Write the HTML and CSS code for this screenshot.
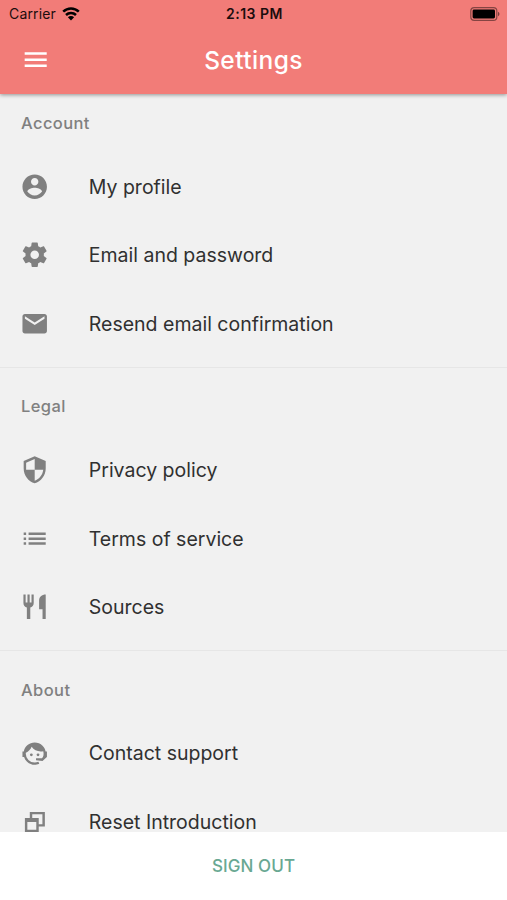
FILE: index.html
```html
<!DOCTYPE html>
<html lang="en">
<head>
    <meta charset="UTF-8">
    <title>Settings</title>
    <link rel="stylesheet" href="styles.css">
</head>
<body>

<header class="app-header">
    <div class="status-bar">
        <div class="carrier">
            <span>Carrier</span>
            <svg class="wifi" viewBox="0 0 18 14">
                <path d="M1.2 4.7a11.2 11.2 0 0 1 15.6 0M4 8a7.2 7.2 0 0 1 10 0" fill="none" stroke="#000" stroke-width="2.5"/>
                <path d="M9 13.4l-3.1-3.1a4.4 4.4 0 0 1 6.2 0z"/>
            </svg>
        </div>
        <span class="time">2:13 PM</span>
        <div class="battery-box">
            <svg class="battery" viewBox="0 0 30 14">
                <rect x="0.8" y="0.7" width="26" height="12.6" rx="3.4" fill="none" stroke="#000" stroke-opacity="0.45" stroke-width="1.2"/>
                <rect x="2.6" y="2.5" width="22.4" height="9" rx="1.4"/>
                <path d="M28 4.8c2 .8 2 3.6 0 4.4z" fill-opacity="0.5"/>
            </svg>
        </div>
    </div>
    <div class="nav-bar">
        <svg class="icon menu" viewBox="0 0 24 24"><path d="M3 18h18v-2H3v2zm0-5h18v-2H3v2zm0-7v2h18V6H3z"/></svg>
        <h1>Settings</h1>
    </div>
</header>

<main class="settings">
    <section>
        <h2>Account</h2>
        <ul>
            <li>
                <svg class="icon" viewBox="0 0 24 24"><path d="M12 2C6.48 2 2 6.48 2 12s4.48 10 10 10 10-4.48 10-10S17.52 2 12 2zm0 3c1.66 0 3 1.34 3 3s-1.34 3-3 3-3-1.34-3-3 1.34-3 3-3zm0 14.2c-2.5 0-4.71-1.28-6-3.22.03-1.99 4-3.08 6-3.08 1.99 0 5.97 1.09 6 3.08-1.29 1.94-3.5 3.22-6 3.22z"/></svg>
                <span>My profile</span>
            </li>
            <li>
                <svg class="icon" viewBox="0 0 24 24"><path d="M12 15.5A3.5 3.5 0 0 1 8.5 12 3.5 3.5 0 0 1 12 8.5a3.5 3.5 0 0 1 3.5 3.5 3.5 3.5 0 0 1-3.5 3.5m7.43-2.53c.04-.32.07-.64.07-.97s-.03-.66-.07-1l2.11-1.63c.19-.15.24-.42.12-.64l-2-3.46c-.12-.22-.39-.31-.61-.22l-2.49 1c-.52-.39-1.06-.73-1.69-.98l-.37-2.65A.506.506 0 0 0 14 2h-4c-.25 0-.46.18-.5.42l-.37 2.65c-.63.25-1.17.59-1.69.98l-2.49-1c-.22-.09-.49 0-.61.22l-2 3.46c-.13.22-.07.49.12.64L4.57 11c-.04.34-.07.67-.07 1s.03.65.07.97l-2.11 1.66c-.19.15-.25.42-.12.64l2 3.46c.12.22.39.3.61.22l2.49-1.01c.52.4 1.06.74 1.69.99l.37 2.65c.04.24.25.42.5.42h4c.25 0 .46-.18.5-.42l.37-2.65c.63-.26 1.17-.59 1.69-.99l2.49 1.01c.22.08.49 0 .61-.22l2-3.46c.12-.22.07-.49-.12-.64z"/></svg>
                <span>Email and password</span>
            </li>
            <li>
                <svg class="icon" viewBox="0 0 24 24"><path d="M20 4H4c-1.1 0-1.99.9-1.99 2L2 18c0 1.1.9 2 2 2h16c1.1 0 2-.9 2-2V6c0-1.1-.9-2-2-2zm0 4l-8 5-8-5V6l8 5 8-5v2z"/></svg>
                <span>Resend email confirmation</span>
            </li>
        </ul>
    </section>

    <section>
        <h2>Legal</h2>
        <ul>
            <li>
                <svg class="icon" viewBox="0 0 24 24"><path d="M12 1L3 5v6c0 5.55 3.84 10.74 9 12 5.16-1.26 9-6.45 9-12V5l-9-4zm0 10.99h7c-.53 4.12-3.28 7.79-7 8.94V12H5V6.3l7-3.11v8.8z"/></svg>
                <span>Privacy policy</span>
            </li>
            <li>
                <svg class="icon" viewBox="0 0 24 24"><path d="M3 13h2v-2H3v2zm0 4h2v-2H3v2zm0-8h2V7H3v2zm4 4h14v-2H7v2zm0 4h14v-2H7v2zM7 7v2h14V7H7z"/></svg>
                <span>Terms of service</span>
            </li>
            <li>
                <svg class="icon" viewBox="0 0 24 24"><path d="M2.8 2h1.8v6.5H6.1V2h1.8v6.5h1.5V2h1.8v7c0 2-1.2 3.3-2.8 3.7V22H5.6v-9.3C4 12.3 2.8 11 2.8 9zM21 2v20h-2.6v-8H15.6V7c0-3 2.2-5 5.4-5z"/></svg>
                <span>Sources</span>
            </li>
        </ul>
    </section>

    <section>
        <h2>About</h2>
        <ul>
            <li>
                <svg class="icon" viewBox="0 0 24 24"><path d="M18.72 14.76C19.07 13.91 19.26 13 19.26 12C19.26 11.28 19.15 10.59 18.96 9.95C18.31 10.1 17.63 10.18 16.92 10.18C13.86 10.18 11.15 8.67 9.5 6.34C8.61 8.5 6.91 10.26 4.77 11.22C4.73 11.47 4.73 11.74 4.73 12A7.27 7.27 0 0 0 12 19.27C13.05 19.27 14.06 19.04 14.97 18.63C15.54 19.72 15.8 20.26 15.78 20.26C14.14 20.81 12.87 21.08 12 21.08C9.58 21.08 7.27 20.13 5.57 18.42C4.53 17.38 3.76 16.11 3.33 14.73H2V10.18H3.09C3.93 6.04 7.6 2.92 12 2.92C14.4 2.92 16.71 3.87 18.42 5.58C19.69 6.84 20.54 8.45 20.89 10.18H22V14.73H21.94L18.38 18L13.08 17.4V15.73H17.91z"/><circle cx="9.27" cy="12.91" r="1.14"/><circle cx="14.72" cy="12.91" r="1.14"/></svg>
                <span>Contact support</span>
            </li>
            <li>
                <svg class="icon" viewBox="0 0 24 24"><path d="M8 4h12.3v12h-5v4.5H4V9h4zM10 6v3h5.3v5h3V6zM6 12.2v6.3h7.3v-6.3z" fill-rule="evenodd"/></svg>
                <span>Reset Introduction</span>
            </li>
        </ul>
    </section>
</main>

<footer class="sign-out">
    <button>SIGN OUT</button>
</footer>

</body>
</html>
```
FILE: styles.css
```css
* {
    box-sizing: border-box;
}

body {
    margin: 0;
    height: 900px;
    display: flex;
    flex-direction: column;
    overflow: hidden;
    background: #f1f1f1;
    font-family: Inter, 'Liberation Sans', sans-serif;
}

.app-header {
    flex: none;
    height: 94px;
    background: #f27c78;
    box-shadow: 0 1px 4px rgba(0, 0, 0, 0.4);
    z-index: 1;
}

.status-bar {
    display: grid;
    grid-template-columns: 1fr auto 1fr;
    align-items: center;
    height: 27px;
    padding: 0 7px 0 9px;
    font-size: 14px;
    color: #1c0d0d;
}

.carrier {
    display: flex;
    align-items: center;
    gap: 6px;
    letter-spacing: 0.15px;
}

.wifi {
    width: 18px;
    height: 14px;
}

.time {
    font-weight: 600;
    letter-spacing: 0.5px;
}

.battery-box {
    display: flex;
    justify-content: flex-end;
}

.battery {
    width: 30px;
    height: 14px;
}

.nav-bar {
    display: grid;
    grid-template-columns: 1fr auto 1fr;
    align-items: center;
    height: 65px;
    padding: 0 20.5px;
}

.nav-bar h1 {
    margin: 0;
    color: #fff;
    font-size: 24.5px;
    font-weight: 500;
    letter-spacing: 0.4px;
}

.icon {
    width: 29.4px;
    height: 29.4px;
    flex: none;
    fill: #808080;
}

.menu {
    fill: #fff;
}

.settings {
    flex: 1;
    min-height: 0;
    overflow: hidden;
}

.settings section + section {
    margin-top: 9px;
    padding-top: 9.5px;
    border-top: 1px solid #e6e6e6;
}

.settings h2 {
    margin: 0;
    padding-left: 21px;
    height: 58.4px;
    line-height: 58px;
    font-size: 16.5px;
    font-weight: 500;
    letter-spacing: 0.4px;
    color: #808080;
}

.settings ul {
    margin: 0;
    padding: 0;
    list-style: none;
}

.settings li {
    display: flex;
    align-items: center;
    gap: 39px;
    height: 68.5px;
    padding-left: 20.4px;
    font-size: 19.5px;
    color: #303030;
}

.sign-out {
    flex: none;
    height: 68px;
    background: #fff;
    display: flex;
    justify-content: center;
    align-items: center;
}

.sign-out button {
    border: none;
    background: none;
    padding: 0;
    font-family: inherit;
    font-size: 17px;
    font-weight: 500;
    letter-spacing: 0.1px;
    color: #69a892;
}
```
